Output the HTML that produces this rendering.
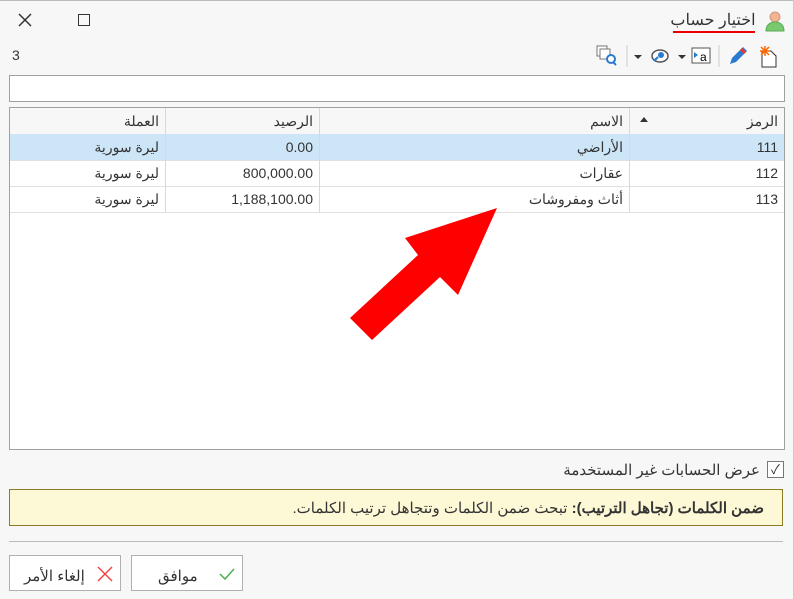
<!DOCTYPE html>
<html><head><meta charset="utf-8"><style>
body{margin:0;width:794px;height:599px;background:#f7f7f7;font-family:"Liberation Sans","Noto Sans CJK SC",sans-serif;position:relative;overflow:hidden;font-size:14px;color:#333}
.a{position:absolute}
.grid{left:9px;top:107px;width:774px;height:341px;border:1px solid #a0a0a0;background:#fff}
.row{position:absolute;left:0;width:774px;height:26px;border-bottom:1px solid #e0e0e0}
.c{position:absolute;top:0;height:26px;line-height:26px;direction:rtl;white-space:nowrap;border-left:1px solid #d8d8d8;box-sizing:border-box;padding-right:6px}
.btn{position:absolute;top:555px;height:36px;border:1px solid #b0b0b0;background:#fff;box-sizing:border-box}
</style></head><body>
<div class="a" style="left:0;top:0;width:794px;height:1px;background:#bbb"></div>
<div class="a" style="left:793px;top:0;width:1px;height:599px;background:#ccc"></div>
<svg class="a" style="left:18px;top:13px" width="14" height="14"><path d="M1 1l12 12M13 1L1 13" stroke="#333" stroke-width="1.5"/></svg>
<div class="a" style="left:78px;top:14px;width:10px;height:10px;border:1.5px solid #333"></div>
<svg class="a" style="left:764px;top:10px" width="22" height="22"><circle cx="11" cy="7" r="5" fill="#f2b48f" stroke="#c98"/><path d="M2 21c0-6 4-9 9-9s9 3 9 9z" fill="#7bc96f" stroke="#5a5"/></svg>
<div class="a" style="left:670px;top:10px;font-size:16px;direction:rtl;color:#333;width:86px;text-align:center">اختيار حساب</div>
<div class="a" style="left:673px;top:31px;width:82px;height:2px;background:#e00"></div>
<div class="a" style="left:12px;top:47px;font-size:14px">3</div>
<svg class="a" style="left:594px;top:42px" width="196" height="28">
<rect x="3" y="4" width="10" height="10" fill="#fff" stroke="#777"/><rect x="6" y="7" width="10" height="10" fill="#fff" stroke="#777"/><circle cx="17" cy="17" r="4" fill="#fff" stroke="#2a7bd0" stroke-width="2"/><path d="M19 20l3 3" stroke="#2a7bd0" stroke-width="2"/>
<line x1="33" y1="3" x2="33" y2="25" stroke="#ccc"/>
<path d="M40 13h8l-4 4z" fill="#333"/>
<ellipse cx="66" cy="14" rx="8" ry="6" fill="#fff" stroke="#555" stroke-width="1.5"/><circle cx="67" cy="13" r="3" fill="#2a7bd0"/><path d="M60 19l4-4" stroke="#2a7bd0" stroke-width="2"/>
<path d="M84 13h8l-4 4z" fill="#333"/>
<rect x="98" y="6" width="18" height="15" fill="#fff" stroke="#555"/><path d="M100 10l4 3-4 3z" fill="#2a7bd0"/><text x="106" y="19" font-size="12" font-family="Liberation Sans">a</text>
<line x1="125" y1="3" x2="125" y2="25" stroke="#ccc"/>
<path d="M136 22l2-6 11-11 4 4-11 11z" fill="#2a7bd0"/><path d="M147 7l4 4" stroke="#e33" stroke-width="3"/>
<path d="M168 9h9l5 5v11h-14z" fill="#fff" stroke="#333"/><path d="M171 4v10M166 9h10M167 5l8 8M175 5l-8 8" stroke="#f60" stroke-width="1.5"/>
</svg>
<div class="a" style="left:9px;top:75px;width:774px;height:25px;border:1px solid #a0a0a0;background:#fff"></div>
<div class="grid a">
 <div class="row" style="top:0;background:#f7f7f7;border-bottom:1px solid #ccc">
  <div class="c" style="left:619px;width:155px">الرمز<span style="position:absolute;left:10px;top:9px;border:4px solid transparent;border-bottom:5px solid #333;border-top:0"></span></div>
  <div class="c" style="left:309px;width:310px">الاسم</div>
  <div class="c" style="left:155px;width:154px">الرصيد</div>
  <div class="c" style="left:0;width:155px;border-left:0">العملة</div>
 </div>
 <div class="row" style="top:26px;background:#cde6f7">
  <div class="c" style="left:619px;width:155px">111</div><div class="c" style="left:309px;width:310px">الأراضي</div><div class="c" style="left:155px;width:154px">0.00</div><div class="c" style="left:0;width:155px;border-left:0">ليرة سورية</div></div>
 <div class="row" style="top:52px">
  <div class="c" style="left:619px;width:155px">112</div><div class="c" style="left:309px;width:310px">عقارات</div><div class="c" style="left:155px;width:154px">800,000.00</div><div class="c" style="left:0;width:155px;border-left:0">ليرة سورية</div></div>
 <div class="row" style="top:78px">
  <div class="c" style="left:619px;width:155px">113</div><div class="c" style="left:309px;width:310px">أثاث ومفروشات</div><div class="c" style="left:155px;width:154px">1,188,100.00</div><div class="c" style="left:0;width:155px;border-left:0">ليرة سورية</div></div>
</div>
<svg class="a" style="left:0;top:0" width="794" height="599"><polygon points="497,208 458,295 440,277 372,340 350,318 418,255 405,238" fill="#f00"/></svg>
<div class="a" style="left:767px;top:461px;width:15px;height:15px;border:1px solid #777;background:#fff;font-size:13px;line-height:15px;text-align:center">✓</div>
<div class="a" style="left:500px;top:461px;width:260px;direction:rtl;font-size:15px">عرض الحسابات غير المستخدمة</div>
<div class="a" style="left:9px;top:489px;width:772px;height:35px;border:1px solid #8b7a20;background:#fdf8d6;direction:rtl;line-height:37px;font-size:15px"><span style="padding-right:18px"><b>ضمن الكلمات (تجاهل الترتيب):</b> تبحث ضمن الكلمات وتتجاهل ترتيب الكلمات.</span></div>
<div class="a" style="left:9px;top:541px;width:774px;height:1px;background:#bbb"></div>
<div class="btn" style="left:131px;width:112px"><span class="a" style="left:26px;top:11px;font-size:15px">موافق</span><svg class="a" style="left:86px;top:10px" width="18" height="16"><path d="M2 8l5 5 9-10" fill="none" stroke="#4caf50" stroke-width="1.5"/></svg></div>
<div class="btn" style="left:9px;width:112px"><span class="a" style="left:14px;top:11px;font-size:15px">إلغاء الأمر</span><svg class="a" style="left:86px;top:9px" width="18" height="18"><path d="M2 2l14 14M16 2L2 16" stroke="#e44" stroke-width="1.5"/></svg></div>
</body></html>
